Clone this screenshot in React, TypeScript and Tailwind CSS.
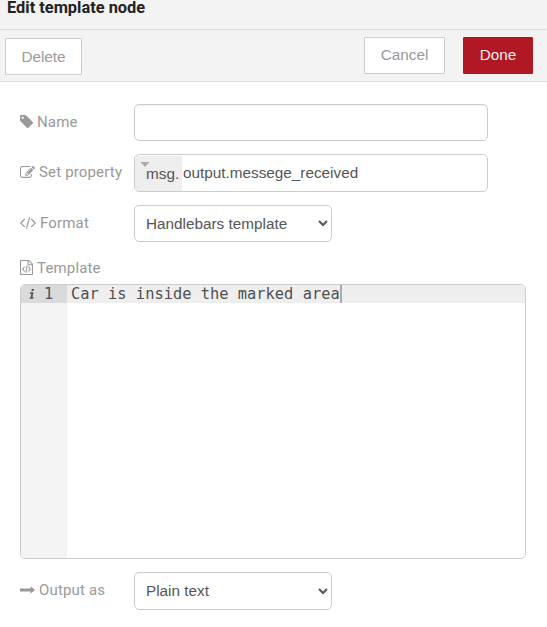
import React from "react";

const TAG =
  "M448 448q0-53-37.5-90.5t-90.5-37.5-90.5 37.5-37.5 90.5 37.5 90.5 90.5 37.5 90.5-37.5 37.5-90.5zm1067 576q0 53-37 90l-491 492q-39 37-91 37-53 0-90-37l-715-716q-38-37-64.5-101t-26.5-117v-416q0-52 38-90t90-38h416q53 0 117 26.5t102 64.5l715 714q37 39 37 91z";
const EDIT =
  "M888 1184l116-116-152-152-116 116v56h96v96h56zm440-720q-16-16-33 1l-350 350q-17 17-1 33t33-1l350-350q17-17 1-33zm80 594v190q0 119-84.5 203.5t-203.5 84.5h-832q-119 0-203.5-84.5t-84.5-203.5v-832q0-119 84.5-203.5t203.5-84.5h832q63 0 117 25 15 7 18 23 3 17-9 29l-49 49q-14 14-32 8-23-6-45-6h-832q-66 0-113 47t-47 113v832q0 66 47 113t113 47h832q66 0 113-47t47-113v-126q0-13 9-22l64-64q15-15 35-7t20 29zm-96-738l288 288-672 672h-288v-288zm444 132l-92 92-288-288 92-92q28-28 68-28t68 28l152 152q28 28 28 68t-28 68z";
const CODE =
  "M553 1399l-50 50q-10 10-23 10t-23-10l-466-466q-10-10-10-23t10-23l466-466q10-10 23-10t23 10l50 50q10 10 10 23t-10 23l-393 393 393 393q10 10 10 23t-10 23zm591-1067l-373 1291q-4 13-15.5 19.5t-23.5 2.5l-62-17q-13-4-19.5-15.5t-2.5-24.5l373-1291q4-13 15.5-19.5t23.5-2.5l62 17q13 4 19.5 15.5t2.5 24.5zm657 651l-466 466q-10 10-23 10t-23-10l-50-50q-10-10-10-23t10-23l393-393-393-393q-10-10-10-23t10-23l50-50q10-10 23-10t23 10l466 466q10 10 10 23t-10 23z";
const FILE_CODE =
  "M1596 380q28 28 48 76t20 88v1152q0 40-28 68t-68 28h-1344q-40 0-68-28t-28-68v-1600q0-40 28-68t68-28h896q40 0 88 20t76 48zm-444-244v376h376q-10-29-22-41l-313-313q-12-12-41-22zm384 1528v-1024h-416q-40 0-68-28t-28-68v-416h-768v1536h1280zm-928-896q8-11 21-12.5t24 6.5l51 38q11 8 12.5 21t-6.5 24l-182 243 182 243q8 11 6.5 24t-12.5 21l-51 38q-11 8-24 6.5t-21-12.5l-226-301q-14-19 0-38zm802 301q14 19 0 38l-226 301q-8 11-21 12.5t-24-6.5l-51-38q-11-8-12.5-21t6.5-24l182-243-182-243q-8-11-6.5-24t12.5-21l51-38q11-8 24-6.5t21 12.5zm-620 461q-13-2-20.5-13t-5.5-24l138-831q2-13 13-20.5t24-5.5l63 10q13 2 20.5 13t5.5 24l-138 831q-2 13-13 20.5t-24 5.5z";
const ARROW = "M0 2.5h10.5V0.3L15 4l-4.500 3.700V5.500H0z";

function Icon({ d, box, className }: { d: string; box: string; className: string }) {
  return (
    <svg viewBox={box} preserveAspectRatio="none" className={`shrink-0 fill-current ${className}`} aria-hidden="true">
      <path d={d} />
    </svg>
  );
}

function Label({ icon, children }: { icon: React.ReactNode; children: React.ReactNode }) {
  return (
    <label className="flex w-[114px] shrink-0 items-center whitespace-nowrap font-['Roboto',sans-serif] text-[15px] leading-5 tracking-[0.16px] text-[#999]">
      {icon}
      {children}
    </label>
  );
}

const field =
  "border border-[#ccc] rounded-[5px] bg-white font-['Liberation_Sans',sans-serif] text-[15.3px] text-[#555] outline-none";
const button =
  "flex items-center justify-center border font-['Liberation_Sans',sans-serif] text-[15.3px] rounded-[1px]";

export default function App() {
  return (
    <main className="flex h-[627px] w-[547px] flex-col overflow-hidden bg-white">
      <header className="h-[30px] shrink-0 border-b border-[#ddd] bg-[#f3f3f3] pl-[7px] font-['Roboto',sans-serif] text-[16.4px] leading-[15px] font-bold text-[#222]">
        Edit template node
      </header>
      <div className="flex h-[52px] shrink-0 items-start border-b border-[#ddd] bg-[#f3f3f3] pt-[7px] pl-[5px]">
        <button className={`${button} mt-px h-[37px] w-[77px] border-[#ccc] bg-white pt-px text-[#999]`}>Delete</button>
        <button className={`${button} ml-auto h-[37px] w-[81px] border-[#ccc] bg-white text-[#999]`}>Cancel</button>
        <button className={`${button} mr-[14px] ml-[18px] h-[37px] w-[70px] border-[#ad1625] bg-[#b01825] text-[#eee]`}>
          Done
        </button>
      </div>
      <form className="flex flex-col pt-[22px] pl-5">
        <div className="mb-[13px] flex h-[37px]">
          <Label icon={<Icon d={TAG} box="0 128 1515 1515" className="-mt-0.5 mr-1 size-[13px]" />}>
            <span className="-mt-0.5">Name</span>
          </Label>
          <input className={`${field} w-[354px] px-3 shadow-[inset_0_1px_1px_rgba(0,0,0,0.06)]`} />
        </div>
        <div className="mb-[13px] flex h-[38px]">
          <Label icon={<Icon d={EDIT} box="0 128 1792 1536" className="-mt-0.5 mr-1 h-[13px] w-[15px]" />}>
            <span className="-mt-0.5">Set property</span>
          </Label>
          <div className={`${field} flex w-[354px] items-center overflow-hidden`}>
            <div className="relative mt-px flex h-[35px] w-[47px] items-center bg-[#eee] pt-px pl-[11px]">
              <svg viewBox="0 0 10 5" className="absolute top-[6px] left-[5px] h-[5px] w-2.5 fill-[#aaa]">
                <path d="M0.500 0h9L5 5z" />
              </svg>
              msg.
            </div>
            <span className="ml-px">output.messege_received</span>
          </div>
        </div>
        <div className="flex h-[37px]">
          <Label icon={<Icon d={CODE} box="-19 256 1830 1400" className="mr-1 -mt-px h-3 w-4" />}>
            <span className="-mt-0.5">Format</span>
          </Label>
          <select className={`${field} w-[198px] pl-[7px]`}>
            <option>Handlebars template</option>
          </select>
        </div>
        <div className="mt-4 flex h-5">
          <Label icon={<Icon d={FILE_CODE} box="128 0 1536 1792" className="mr-1 -mt-px h-[15px] w-[13px]" />}>Template</Label>
        </div>
        <div className="mt-[6px] flex h-[275px] w-[506px] overflow-hidden rounded-[5px] border border-[#ccc] font-['DejaVu_Sans_Mono',monospace] text-[15.4px] text-[#505050]">
          <div className="w-[46px] shrink-0 bg-[#f4f4f4]">
            <div className="flex h-[18px] items-center bg-[#dadada] pl-2">
              <svg viewBox="0 0 6 10" className="mr-[9px] h-[10px] w-1.5 fill-[#555]" aria-hidden="true">
                <path d="M2.800 0h2.200l-.4 2H2.400zM1 3.200h3.500L3.500 8.300h1.200L4.200 9.800H.5L1 8.300h.6l.7-3.600H.7z" />
              </svg>
              <span className="leading-[18px]">1</span>
            </div>
          </div>
          <div className="grow">
            <div className="flex h-[18px] items-center bg-[#eee] pl-1">
              <span className="whitespace-pre leading-[18px]">Car is inside the marked area</span>
              <span className="h-[18px] w-0.5 bg-[#aaa]" />
            </div>
          </div>
        </div>
        <div className="mt-[13px] flex h-[38px]">
          <Label icon={<Icon d={ARROW} box="0 0 15 8" className="mr-1 -mt-[3px] h-2 w-[15px]" />}>
            <span className="-mt-0.5">Output as</span>
          </Label>
          <select className={`${field} w-[198px] pb-0.5 pl-[7px]`}>
            <option>Plain text</option>
          </select>
        </div>
      </form>
    </main>
  );
}
